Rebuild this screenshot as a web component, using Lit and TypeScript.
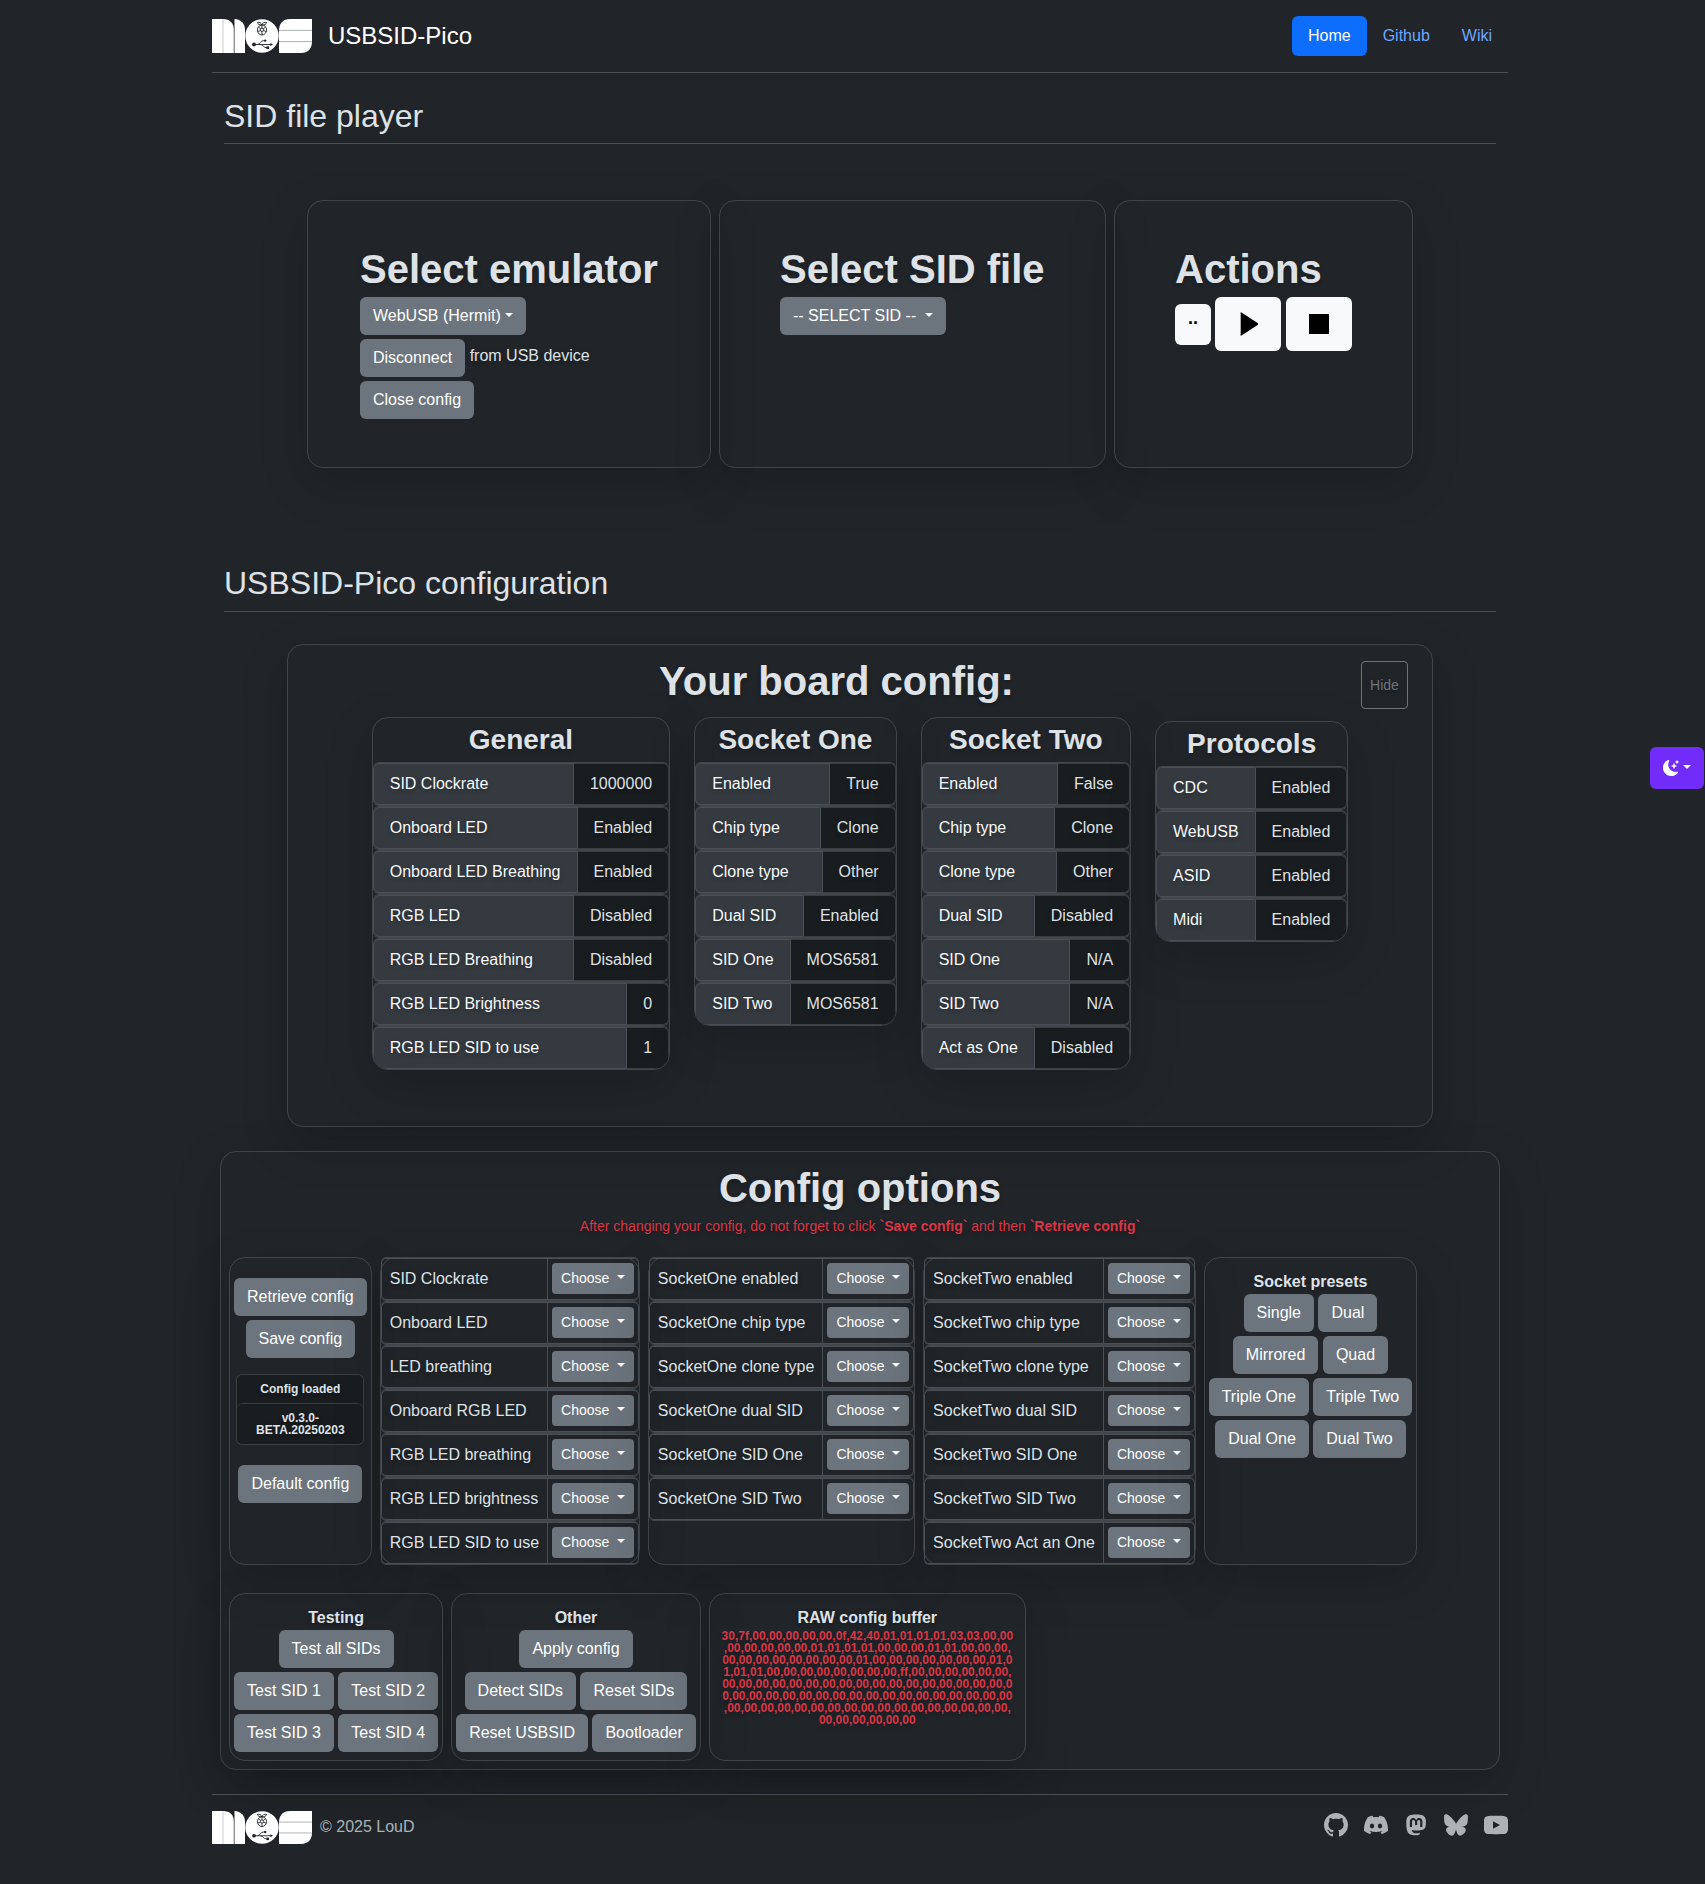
import { LitElement, html, svg, css } from "lit";
import { customElement, property } from "lit/decorators.js";

type Pair = [string, string];

const GENERAL: Pair[] = [
  ["SID Clockrate", "1000000"],
  ["Onboard LED", "Enabled"],
  ["Onboard LED Breathing", "Enabled"],
  ["RGB LED", "Disabled"],
  ["RGB LED Breathing", "Disabled"],
  ["RGB LED Brightness", "0"],
  ["RGB LED SID to use", "1"],
];
const SOCKET_ONE: Pair[] = [
  ["Enabled", "True"],
  ["Chip type", "Clone"],
  ["Clone type", "Other"],
  ["Dual SID", "Enabled"],
  ["SID One", "MOS6581"],
  ["SID Two", "MOS6581"],
];
const SOCKET_TWO: Pair[] = [
  ["Enabled", "False"],
  ["Chip type", "Clone"],
  ["Clone type", "Other"],
  ["Dual SID", "Disabled"],
  ["SID One", "N/A"],
  ["SID Two", "N/A"],
  ["Act as One", "Disabled"],
];
const PROTOCOLS: Pair[] = [
  ["CDC", "Enabled"],
  ["WebUSB", "Enabled"],
  ["ASID", "Enabled"],
  ["Midi", "Enabled"],
];

const OPTIONS: string[][] = [
  ["SID Clockrate", "Onboard LED", "LED breathing", "Onboard RGB LED", "RGB LED breathing", "RGB LED brightness", "RGB LED SID to use"],
  ["SocketOne enabled", "SocketOne chip type", "SocketOne clone type", "SocketOne dual SID", "SocketOne SID One", "SocketOne SID Two"],
  ["SocketTwo enabled", "SocketTwo chip type", "SocketTwo clone type", "SocketTwo dual SID", "SocketTwo SID One", "SocketTwo SID Two", "SocketTwo Act an One"],
];

const PRESETS = [["Single", "Dual"], ["Mirrored", "Quad"], ["Triple One", "Triple Two"], ["Dual One", "Dual Two"]];
const TESTING = [["Test all SIDs"], ["Test SID 1", "Test SID 2"], ["Test SID 3", "Test SID 4"]];
const OTHER = [["Apply config"], ["Detect SIDs", "Reset SIDs"], ["Reset USBSID", "Bootloader"]];

const RAW = [
  "30,7f,00,00,00,00,00,0f,42,40,01,01,01,01,03,03,00,00",
  ",00,00,00,00,00,01,01,01,01,00,00,00,01,01,00,00,00,",
  "00,00,00,00,00,00,00,00,01,00,00,00,00,00,00,00,01,0",
  "1,01,01,00,00,00,00,00,00,00,00,ff,00,00,00,00,00,00,",
  "00,00,00,00,00,00,00,00,00,00,00,00,00,00,00,00,00,0",
  "0,00,00,00,00,00,00,00,00,00,00,00,00,00,00,00,00,00",
  ",00,00,00,00,00,00,00,00,00,00,00,00,00,00,00,00,00,",
  "00,00,00,00,00,00",
];

const ICONS: { box: string; shape: unknown }[] = [
  {
    box: "0 0 16 16",
    shape: svg`<path d="M8 0C3.58 0 0 3.58 0 8c0 3.54 2.29 6.53 5.47 7.59.4.07.55-.17.55-.38 0-.19-.01-.82-.01-1.49-2.01.37-2.53-.49-2.69-.94-.09-.23-.48-.94-.82-1.13-.28-.15-.68-.52-.01-.53.63-.01 1.08.58 1.23.82.72 1.21 1.87.87 2.33.66.07-.52.28-.87.51-1.07-1.78-.2-3.64-.89-3.64-3.95 0-.87.31-1.59.82-2.15-.08-.2-.36-1.02.08-2.12 0 0 .67-.21 2.2.82.64-.18 1.32-.27 2-.27s1.36.09 2 .27c1.53-1.04 2.2-.82 2.2-.82.44 1.1.16 1.92.08 2.12.51.56.82 1.27.82 2.15 0 3.07-1.87 3.75-3.65 3.95.29.25.54.73.54 1.48 0 1.07-.01 1.93-.01 2.2 0 .21.15.46.55.38A8.01 8.01 0 0 0 16 8c0-4.42-3.58-8-8-8"/>`,
  },
  {
    box: "0 0 16 16",
    shape: svg`<path d="M13.545 2.907a13.2 13.2 0 0 0-3.257-1.011.05.05 0 0 0-.052.025c-.141.25-.297.577-.406.833a12.2 12.2 0 0 0-3.658 0 8 8 0 0 0-.412-.833.05.05 0 0 0-.052-.025c-1.125.194-2.22.534-3.257 1.011a.04.04 0 0 0-.021.018C.356 6.024-.213 9.047.066 12.032q.003.022.021.037a13.3 13.3 0 0 0 3.995 2.02.05.05 0 0 0 .056-.019q.463-.63.818-1.329a.05.05 0 0 0-.01-.059l-.018-.011a9 9 0 0 1-1.248-.595.05.05 0 0 1-.02-.066l.015-.019q.127-.095.248-.195a.05.05 0 0 1 .051-.007c2.619 1.196 5.454 1.196 8.041 0a.05.05 0 0 1 .053.007q.121.1.248.195a.05.05 0 0 1-.004.085 8 8 0 0 1-1.249.594.05.05 0 0 0-.03.03.05.05 0 0 0 .003.041c.24.465.515.909.817 1.329a.05.05 0 0 0 .056.019 13.2 13.2 0 0 0 4.001-2.02.05.05 0 0 0 .021-.037c.334-3.451-.559-6.449-2.366-9.106a.03.03 0 0 0-.02-.019m-8.198 7.307c-.789 0-1.438-.724-1.438-1.612s.637-1.613 1.438-1.613c.807 0 1.45.73 1.438 1.613 0 .888-.637 1.612-1.438 1.612m5.316 0c-.788 0-1.438-.724-1.438-1.612s.637-1.613 1.438-1.613c.807 0 1.451.73 1.438 1.613 0 .888-.631 1.612-1.438 1.612"/>`,
  },
  {
    box: "-1.3 -1.1 18.4 18.4",
    shape: svg`<path d="M11.19 12.195c2.016-.24 3.77-1.475 3.99-2.603.348-1.778.32-4.339.32-4.339 0-3.47-2.286-4.488-2.286-4.488C12.062.238 10.083.017 8.027 0h-.05C5.92.017 3.942.238 2.79.765c0 0-2.285 1.017-2.285 4.488l-.002.662c-.004.64-.007 1.35.011 2.091.083 3.394.626 6.74 3.78 7.57 1.454.383 2.703.463 3.709.408 1.823-.1 2.847-.647 2.847-.647l-.06-1.317s-1.303.41-2.767.36c-1.45-.05-2.98-.156-3.215-1.928a4 4 0 0 1-.033-.496s1.424.346 3.228.428c1.103.05 2.137-.064 3.188-.189zm1.613-2.47H11.13v-4.08c0-.859-.364-1.295-1.091-1.295-.804 0-1.207.517-1.207 1.541v2.233H7.168V5.89c0-1.024-.403-1.541-1.207-1.541-.727 0-1.091.436-1.091 1.296v4.079H3.197V5.522q0-1.288.66-2.046c.456-.505 1.052-.764 1.793-.764.856 0 1.504.328 1.933.983L8 4.39l.417-.695c.429-.655 1.077-.983 1.934-.983.74 0 1.336.259 1.791.764q.662.757.661 2.046z"/>`,
  },
  {
    box: "0 0 24 24",
    shape: svg`<path d="M12 10.8c-1.087-2.114-4.046-6.053-6.798-7.995C2.566.944 1.561 1.266.902 1.565.139 1.908 0 3.08 0 3.768c0 .69.378 5.65.624 6.479.815 2.736 3.713 3.66 6.383 3.364.136-.02.275-.039.415-.056-.138.022-.276.04-.415.056-3.912.58-7.387 2.005-2.83 7.078 5.013 5.19 6.87-1.113 7.823-4.308.953 3.195 2.05 9.271 7.733 4.308 4.267-4.308 1.172-6.498-2.74-7.078a8.741 8.741 0 0 1-.415-.056c.14.017.279.036.415.056 2.67.297 5.568-.628 6.383-3.364.246-.828.624-5.79.624-6.478 0-.69-.139-1.861-.902-2.206-.659-.298-1.664-.62-4.3 1.24C16.046 4.748 13.087 8.687 12 10.8Z"/>`,
  },
  {
    box: "0 0 24 24",
    shape: svg`<path fill-rule="evenodd" d="M4.5 3C8 2.8 16 2.8 19.500 3C22.600 3.200 24 4.800 24 7.600V16.400C24 19.200 22.600 20.800 19.500 21C16 21.200 8 21.200 4.500 21C1.400 20.800 0 19.200 0 16.400V7.600C0 4.800 1.400 3.200 4.500 3ZM9 8.300V15.700L16 12Z"/>`,
  },
];

@customElement("mos-logo")
class MosLogo extends LitElement {
  @property({ type: Number }) height = 34;

  static styles = css`
    :host { display: block; }
    svg { display: block; }
  `;

  render() {
    return html`
      <svg width="100" height=${this.height} viewBox="0 0 100 34" preserveAspectRatio="none">
        <g fill="#fff">
          <path d="M0 0H11C18 0 21.800 4 21.800 11V34H0Z" />
          <path d="M22.500 0C29 .5 33 4.500 33 11V34H22.500Z" />
          <circle cx="50" cy="17" r="16.700" />
          <path d="M78 0H100V22.500C100 29.500 96 34 89 34H67V11.500C67 4.500 71 0 78 0Z" />
        </g>
        <path d="M11 0.500V34" stroke="#c4c5c6" stroke-width=".9" />
        <path d="M67 11.400H100M67 22.600H100" stroke="#8d9093" stroke-width=".7" />
        <g fill="none" stroke="#212529" stroke-width=".9">
          <path d="M49.800 6C47.500 6.200 45.500 5 45.400 3.400C47.500 3 49.400 3.800 49.800 6C50.200 3.800 52.500 3 54.600 3.400C54.500 5 52.200 6.200 49.800 6Z" />
          <ellipse cx="50" cy="11" rx="4.600" ry="5" />
          <circle cx="50" cy="10.800" r="1.700" />
          <path d="M46.500 8.200L48.700 9.700M53.500 8.200L51.300 9.700M50 12.500V16M45.600 12.500L48.500 11.600M54.400 12.500L51.500 11.600M50 6.200V9" />
        </g>
        <g stroke="#212529" stroke-width=".9" fill="none">
          <path d="M42 25.500H59M45.500 25.500C48 25.500 48.500 21.700 51.200 21.700H52.500M48.500 25.500C51 25.500 51.500 28.700 54 28.700H55.500" />
        </g>
        <g fill="#212529">
          <circle cx="42" cy="25.500" r="1.900" />
          <circle cx="53.200" cy="21.600" r="1.200" />
          <rect x="54.400" y="27.400" width="2.600" height="2.600" />
          <path d="M58.300 23.900L61 25.500L58.300 27.100Z" />
        </g>
      </svg>
    `;
  }
}

@customElement("board-table")
class BoardTable extends LitElement {
  @property() heading = "";
  @property({ attribute: false }) rows: Pair[] = [];

  static styles = css`
    :host { display: block; }
    .card {
      border: 1px solid rgba(255, 255, 255, 0.15);
      border-radius: 16px;
      overflow: hidden;
    }
    .shade {
      border-radius: 16px;
      box-shadow: 0 16px 48px rgba(0, 0, 0, 0.175);
    }
    .heading {
      margin: 0;
      height: 40px;
      padding-top: 5px;
      font-size: 28px;
      font-weight: 700;
      line-height: 33.6px;
      text-align: center;
    }
    .rows { display: flex; flex-direction: column; gap: 2px; }
    .row {
      display: flex;
      height: 42px;
      box-sizing: border-box;
      border-radius: 6px;
      box-shadow: 0 -1px 0 #41464a, 0 1px 0 #41464a;
      line-height: 24px;
      white-space: nowrap;
    }
    .label {
      flex: 1;
      box-sizing: border-box;
      padding: 8px 16px 8px 16px;
      border: 1px solid #495057;
      border-radius: 6px 0 0 6px;
      background: #343a40;
      color: #f8f9fa;
    }
    .value {
      box-sizing: border-box;
      padding: 8px 16px 8px 16px;
      border: 1px solid #3b3f43;
      border-left: 0;
      border-radius: 0 6px 6px 0;
      background: #1a1d20;
    }
  `;

  render() {
    return html`
      <div class="shade">
        <div class="card">
          <h3 class="heading">${this.heading}</h3>
          <div class="rows">
            ${this.rows.map(
              ([label, value]) => html`
                <div class="row"><div class="label">${label}</div><div class="value">${value}</div></div>
              `
            )}
          </div>
        </div>
      </div>
    `;
  }
}

@customElement("app-root")
class AppRoot extends LitElement {
  static styles = css`
    :host {
      display: block;
      position: relative;
      box-sizing: border-box;
      min-height: 1884px;
      overflow: hidden;
      background: #212529;
      color: #dee2e6;
      font: 16px/24px "Liberation Sans", Arial, sans-serif;
    }
    * { box-sizing: border-box; }
    h1, h2 { margin: 0; }
    h1 { height: 48px; font-size: 40px; line-height: 40px; font-weight: 700; white-space: nowrap; }
    svg { display: block; }
    .container { width: 1296px; margin-left: 212px; }

    .header {
      display: flex;
      align-items: center;
      justify-content: space-between;
      height: 73px;
      border-bottom: 1px solid #495057;
    }
    .brand { display: flex; align-items: center; gap: 16px; font-size: 24px; line-height: 36px; color: #fff; }
    .nav { display: flex; }
    .link { padding: 8px 16px; border-radius: 6px; color: #6ea8fe; }
    .link.active { background: #0d6efd; color: #fff; }

    .section-title {
      margin: 0 12px;
      height: 47px;
      border-bottom: 1px solid #495057;
      font-size: 32px;
      line-height: 38.4px;
      font-weight: 400;
    }
    .section-title.first { margin-top: 24px; }
    .section-title.second { margin-top: 96px; height: 48px; }

    .card {
      border: 1px solid rgba(255, 255, 255, 0.15);
      border-radius: 16px;
      box-shadow: 0 16px 48px rgba(0, 0, 0, 0.175);
      text-shadow: 0 2px 4px rgba(0, 0, 0, 0.25);
    }

    .btn {
      display: inline-flex;
      align-items: center;
      height: 38px;
      padding: 0 13px;
      border-radius: 6px;
      background: #6c757d;
      color: #fff;
      text-shadow: none;
      white-space: pre;
    }
    .btn.small { height: 31px; padding: 0 9px; border-radius: 4px; font-size: 14px; line-height: 21px; }
    .caret {
      margin-left: 0.255em;
      margin-top: -2px;
      border-top: 0.3em solid;
      border-left: 0.3em solid transparent;
      border-right: 0.3em solid transparent;
    }
    .small .caret { margin-top: -3.5px; }

    .player { display: flex; justify-content: center; gap: 8px; margin-top: 56px; }
    .player .card { height: 268px; padding: 48px 0 0 60px; }
    .player .emulator { width: 404px; padding-left: 52px; }
    .player .file { width: 387px; }
    .player .actions { width: 299px; }
    .stack { display: flex; flex-direction: column; align-items: flex-start; gap: 4px; }
    .line { display: flex; gap: 4.5px; }
    .aside { padding-top: 5px; }
    .media { display: flex; align-items: center; gap: 4.4px; }
    .light {
      display: flex;
      align-items: center;
      justify-content: center;
      width: 66px;
      height: 54px;
      border-radius: 6px;
      background: #f8f9fa;
      color: #000;
    }
    .light.dots { width: 36px; height: 41px; padding-bottom: 13px; font-size: 18px; font-weight: 700; text-shadow: none; }

    .board { width: 1146px; height: 483px; margin: 32px auto 0; padding-top: 16px; }
    .board-head { display: flex; height: 48px; padding: 0 24px; }
    .board-title { flex: 1; text-align: center; }
    .hide {
      display: flex;
      align-items: center;
      justify-content: center;
      width: 47px;
      height: 48px;
      border: 1px solid #6c757d;
      border-radius: 4px;
      color: #6c757d;
      font-size: 14px;
    }
    .tables { display: flex; justify-content: center; align-items: flex-start; gap: 24px; margin-top: 8px; }
    .lower { margin-top: 4px; }

    .options { width: 1280px; height: 619px; margin: 24px auto 0; padding: 16px 8px 0; }
    .options-title { text-align: center; }
    .warning { height: 21px; color: #dc3545; font-size: 14px; line-height: 21px; text-align: center; }
    .panels { display: flex; gap: 8px; margin-top: 20px; height: 308px; }
    .panels.bottom { margin-top: 28px; height: 168px; }
    .panel { display: flex; flex-direction: column; align-items: center; padding: 12px 4px 0; }
    .panel-title { font-weight: 700; }
    .buttons { display: flex; flex-direction: column; align-items: center; gap: 4px; }

    .manage { padding-top: 20px; gap: 4px; }
    .status {
      width: 128px;
      margin: 12px 0 16px;
      border: 1px solid rgba(255, 255, 255, 0.15);
      border-radius: 6px;
      background: #1a1d20;
      font-size: 12px;
      line-height: 12px;
      font-weight: 700;
      text-align: center;
    }
    .status-item { padding: 8px 16px; }
    .status-item + .status-item { border-top: 1px solid rgba(255, 255, 255, 0.15); border-radius: 6px 6px 0 0; }

    .choices { display: flex; flex-direction: column; gap: 2px; }
    .choice {
      display: flex;
      height: 42px;
      border: 1px solid #495057;
      border-radius: 5px;
      box-shadow: 0 -1px 0 #41464a, 0 1px 0 #41464a;
      white-space: nowrap;
    }
    .choice-label { flex: 1; padding: 8px 8px 0 8px; }
    .choice-pick { padding: 4px; border-left: 1px solid #495057; }

    .raw { width: 317px; }
    .dump { color: #dc3545; font-size: 12px; line-height: 12px; font-weight: 700; text-align: center; }

    .footer {
      display: flex;
      align-items: flex-start;
      justify-content: space-between;
      margin-top: 24px;
      padding-top: 16px;
      border-top: 1px solid #495057;
      color: rgba(222, 226, 230, 0.75);
    }
    .copy { display: flex; align-items: flex-start; gap: 8px; line-height: 32px; }
    .social { display: flex; gap: 16px; padding-top: 2px; }

    .theme {
      position: absolute;
      top: 747px;
      right: 1px;
      display: flex;
      align-items: center;
      width: 54px;
      height: 42px;
      padding-left: 13px;
      border-radius: 6px;
      background: #712cf9;
      color: #fff;
    }
  `;

  private buttonRows(rows: string[][]) {
    return html`
      <div class="buttons">
        ${rows.map((row) => html`<div class="line">${row.map((text) => html`<span class="btn">${text}</span>`)}</div>`)}
      </div>
    `;
  }

  private choices(labels: string[]) {
    return html`
      <div class="card choices">
        ${labels.map(
          (label) => html`
            <div class="choice">
              <span class="choice-label">${label}</span>
              <span class="choice-pick"><span class="btn small">${"Choose "}<i class="caret"></i></span></span>
            </div>
          `
        )}
      </div>
    `;
  }

  render() {
    return html`
      <div class="container">
        <header class="header">
          <div class="brand"><mos-logo></mos-logo><span>USBSID-Pico</span></div>
          <nav class="nav">
            <span class="link active">Home</span><span class="link">Github</span><span class="link">Wiki</span>
          </nav>
        </header>

        <h2 class="section-title first">SID file player</h2>
        <div class="player">
          <div class="card emulator">
            <h1>Select emulator</h1>
            <div class="stack">
              <span class="btn">WebUSB (Hermit)<i class="caret"></i></span>
              <div class="line"><span class="btn">Disconnect</span><span class="aside">from USB device</span></div>
              <span class="btn">Close config</span>
            </div>
          </div>
          <div class="card file">
            <h1>Select SID file</h1>
            <span class="btn">${"-- SELECT SID -- "}<i class="caret"></i></span>
          </div>
          <div class="card actions">
            <h1>Actions</h1>
            <div class="media">
              <span class="light dots">..</span>
              <span class="light"><svg width="20" height="24" viewBox="0 0 20 24"><path d="M2.700 0L21 12L2.700 24Z" /></svg></span>
              <span class="light"><svg width="20" height="20"><rect width="20" height="20" /></svg></span>
            </div>
          </div>
        </div>

        <h2 class="section-title second">USBSID-Pico configuration</h2>
        <div class="card board">
          <div class="board-head">
            <h1 class="board-title">Your board config:</h1>
            <span class="hide">Hide</span>
          </div>
          <div class="tables">
            <board-table heading="General" .rows=${GENERAL}></board-table>
            <board-table heading="Socket One" .rows=${SOCKET_ONE}></board-table>
            <board-table heading="Socket Two" .rows=${SOCKET_TWO}></board-table>
            <board-table class="lower" heading="Protocols" .rows=${PROTOCOLS}></board-table>
          </div>
        </div>

        <div class="card options">
          <h1 class="options-title">Config options</h1>
          <div class="warning">
            After changing your config, do not forget to click <b>\`Save config\`</b> and then <b>\`Retrieve config\`</b>
          </div>
          <div class="panels">
            <div class="card panel manage">
              <span class="btn">Retrieve config</span>
              <span class="btn">Save config</span>
              <div class="status">
                <div class="status-item">Config loaded</div>
                <div class="status-item">v0.3.0-<br />BETA.20250203</div>
              </div>
              <span class="btn">Default config</span>
            </div>
            ${OPTIONS.map((labels) => this.choices(labels))}
            <div class="card panel">
              <div class="panel-title">Socket presets</div>
              ${this.buttonRows(PRESETS)}
            </div>
          </div>
          <div class="panels bottom">
            <div class="card panel">
              <div class="panel-title">Testing</div>
              ${this.buttonRows(TESTING)}
            </div>
            <div class="card panel">
              <div class="panel-title">Other</div>
              ${this.buttonRows(OTHER)}
            </div>
            <div class="card panel raw">
              <div class="panel-title">RAW config buffer</div>
              <div class="dump">${RAW.map((line) => html`<div>${line}</div>`)}</div>
            </div>
          </div>
        </div>

        <footer class="footer">
          <div class="copy"><mos-logo .height=${33}></mos-logo><span>© 2025 LouD</span></div>
          <div class="social">
            ${ICONS.map((icon) => html`<svg width="24" height="24" viewBox=${icon.box} fill="currentColor">${icon.shape}</svg>`)}
          </div>
        </footer>
      </div>

      <div class="theme">
        <svg width="16" height="16" viewBox="0 0 16 16" fill="currentColor">
          <path d="M6 .278a.77.77 0 0 1 .08.858 7.2 7.2 0 0 0-.878 3.46c0 4.021 3.278 7.277 7.318 7.277q.792-.001 1.533-.16a.79.79 0 0 1 .81.316.73.73 0 0 1-.031.893A8.35 8.35 0 0 1 8.344 16C3.734 16 0 12.286 0 7.710 0 4.266 2.114 1.312 5.124.06A.75.75 0 0 1 6 .278" />
          <path d="M10.794 3.148a.217.217 0 0 1 .412 0l.387 1.162c.173.518.579.924 1.097 1.097l1.162.387a.217.217 0 0 1 0 .412l-1.162.387a1.730 1.730 0 0 0-1.097 1.097l-.387 1.162a.217.217 0 0 1-.412 0l-.387-1.162A1.730 1.730 0 0 0 9.310 6.593l-1.162-.387a.217.217 0 0 1 0-.412l1.162-.387a1.730 1.730 0 0 0 1.097-1.097zM13.863.099a.145.145 0 0 1 .274 0l.258.774c.115.346.386.617.732.732l.774.258a.145.145 0 0 1 0 .274l-.774.258a1.160 1.160 0 0 0-.732.732l-.258.774a.145.145 0 0 1-.274 0l-.258-.774a1.160 1.160 0 0 0-.732-.732l-.774-.258a.145.145 0 0 1 0-.274l.774-.258c.346-.115.617-.386.732-.732z" />
        </svg>
        <i class="caret"></i>
      </div>
    `;
  }
}
